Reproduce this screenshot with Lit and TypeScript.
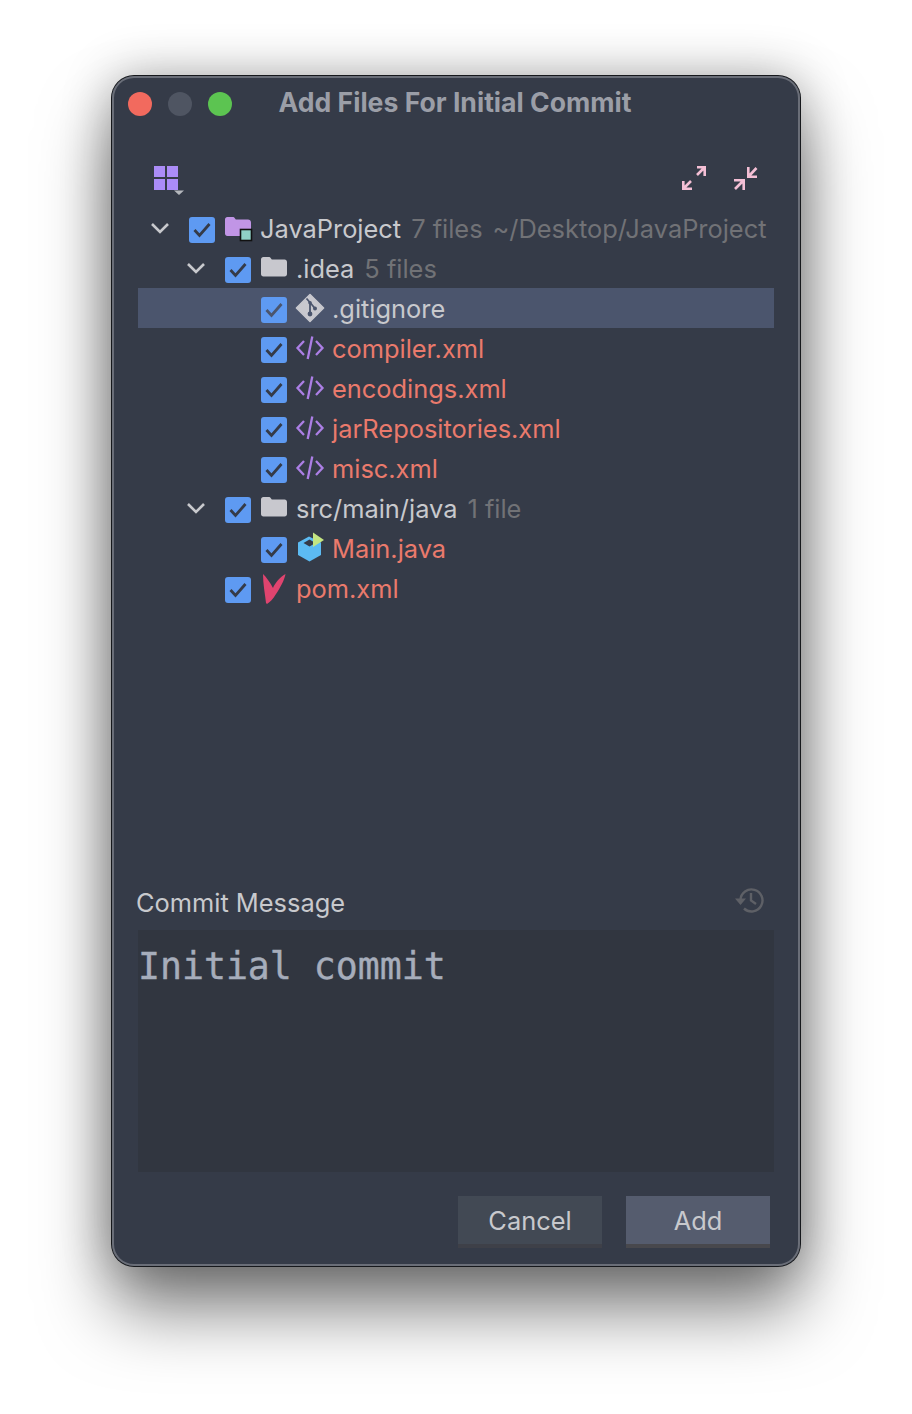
import { LitElement, html, css, svg } from "lit";
import { customElement } from "lit/decorators.js";

type Row = {
  depth: number;
  name: string;
  icon: string;
  meta?: string;
  path?: string;
  open?: boolean;
  added?: boolean;
  selected?: boolean;
};

const rows: Row[] = [
  { depth: 0, name: "JavaProject", icon: "project", meta: "7 files", path: "~/Desktop/JavaProject", open: true },
  { depth: 1, name: ".idea", icon: "folder", meta: "5 files", open: true },
  { depth: 2, name: ".gitignore", icon: "git", selected: true },
  { depth: 2, name: "compiler.xml", icon: "xml", added: true },
  { depth: 2, name: "encodings.xml", icon: "xml", added: true },
  { depth: 2, name: "jarRepositories.xml", icon: "xml", added: true },
  { depth: 2, name: "misc.xml", icon: "xml", added: true },
  { depth: 1, name: "src/main/java", icon: "folder", meta: "1 file", open: true },
  { depth: 2, name: "Main.java", icon: "java", added: true },
  { depth: 1, name: "pom.xml", icon: "maven", added: true },
];

const icons: Record<string, unknown> = {
  project: svg`
    <path d="M1 5.5C1 4.1 2 3 3.400 3H8.600C9.600 3 10.400 3.500 11 4.400L11.800 5.500H24C25.600 5.500 27 6.800 27 8.400V19.500C27 21 25.800 22 24.400 22H3.400C2 22 1 21 1 19.500Z" fill="#c195e6"/>
    <rect x="16.500" y="15.500" width="11" height="11" fill="#8fd0c6" stroke="#111" stroke-width="1.600"/>`,
  folder: svg`
    <path d="M1 5.500C1 4.100 2 3 3.400 3H8.600C9.600 3 10.400 3.500 11 4.400L11.800 5.500H24.600C26 5.500 27 6.600 27 8V20C27 21.400 26 22.500 24.600 22.500H3.400C2 22.500 1 21.400 1 20Z" fill="#c8c8ce"/>`,
  git: svg`
    <path d="M14 0.500 L27.600 14 L14 27.500 L0.400 14Z" fill="#c8c8ce" stroke="#c8c8ce" stroke-width="1.500" stroke-linejoin="round"/>
    <path d="M10.500 4.500 L14 8.500M14 8.500V20M14.500 9 L19 14.500" fill="none" stroke="#4b556d" stroke-width="1.800"/>
    <circle cx="14" cy="20" r="2.400" fill="#4b556d"/>
    <circle cx="14" cy="8.800" r="1.800" fill="#4b556d"/>
    <circle cx="19" cy="14.500" r="2" fill="#4b556d"/>`,
  xml: svg`
    <path d="M8 7 L1.500 14 L8 21M20 7 L26.500 14 L20 21" fill="none" stroke="#ac7fe6" stroke-width="2.300"/>
    <path d="M16.300 2.500 L11.700 25" fill="none" stroke="#ac7fe6" stroke-width="2.300"/>`,
  java: svg`
    <path d="M13 2.500 L25 8.500V21L13.500 27.500 L2 21V8.500Z" fill="#5cbbf3"/>
    <path d="M13.500 5.500 L19.500 9 L13.500 12.500 L7.500 9Z" fill="#353b48"/>
    <path d="M17 -1.500 L28 6 L17 13Z" fill="#c4e582"/>`,
  maven: svg`
    <path d="M3 0C6 3 10 8 13 14C15 9 20 3 25.500 0C24.500 6 20 14 16 20C13 25 10 28 7 30L6 29C5 20 3 10 3 0Z" fill="#e0446f"/>`,
};

@customElement("app-root")
export class AppRoot extends LitElement {
  render() {
    return html`
      <div class="window">
        <header class="titlebar">
          <div class="lights">
            <span class="light red"></span>
            <span class="light grey"></span>
            <span class="light green"></span>
          </div>
          <div class="title">Add Files For Initial Commit</div>
        </header>

        <div class="toolbar">
          <svg class="group" width="32" height="32" viewBox="0 0 32 32">
            <path d="M0 0H11V11H0ZM13 0H24V11H13ZM0 13H11V24H0ZM13 13H24V24H13Z" fill="#ab8cf7"/>
            <path d="M20 24.500H30L25 29Z" fill="#b5b8bd"/>
          </svg>
          <div class="tools">
            <svg width="26" height="26" viewBox="0 0 26 26" fill="none" stroke="#f4bfd5" stroke-width="2.600">
              <path d="M17 1.300H24.700V10M24 2L17 9M3.300 15V22.700H12M4 22L11 15"/>
            </svg>
            <svg width="26" height="26" viewBox="0 0 26 26" fill="none" stroke="#f4bfd5" stroke-width="2.600">
              <path d="M16.300 1V10.700H25M17 10L24.500 2M2 14.300H11.700V24M11 15L3 23"/>
            </svg>
          </div>
        </div>

        <div class="tree">
          ${rows.map(
            (r) => html`
              <div class="row ${r.selected ? "selected" : ""}" style="padding-left:${8 + r.depth * 36}px">
                <span class="chevron">
                  ${r.open
                    ? html`<svg width="20" height="12" viewBox="0 0 20 12">
                        <path d="M2 2 L10 10 L18 2" fill="none" stroke="#c8c9cd" stroke-width="2.600"/>
                      </svg>`
                    : ""}
                </span>
                <span class="check">
                  <svg width="20" height="18" viewBox="0 0 20 18">
                    <path d="M2.500 9 L7.500 14.500 L17.500 3" fill="none" stroke="${r.selected ? "#4b556d" : "#353b48"}" stroke-width="2.800"/>
                  </svg>
                </span>
                <svg class="icon" width="28" height="28" viewBox="0 0 28 28">${icons[r.icon]}</svg>
                <span class="name ${r.added ? "added" : ""}">${r.name}</span>
                ${r.meta ? html`<span class="meta">${r.meta}</span>` : ""}
                ${r.path ? html`<span class="meta">${r.path}</span>` : ""}
              </div>
            `
          )}
        </div>

        <div class="message-head">
          <span class="label">Commit Message</span>
          <svg width="30" height="28" viewBox="0 0 30 28">
            <path d="M6.500 14A11 11 0 1 1 10 22.500" fill="none" stroke="#5e6066" stroke-width="2.400"/>
            <path d="M1 12.500H12L6.500 19Z" fill="#5e6066"/>
            <path d="M17 7V14.500L22 18" fill="none" stroke="#5e6066" stroke-width="2.400"/>
          </svg>
        </div>
        <div class="message">Initial commit</div>

        <div class="buttons">
          <button class="cancel">Cancel</button>
          <button class="add">Add</button>
        </div>
      </div>
    `;
  }

  static styles = css`
    :host {
      display: flex;
      justify-content: center;
      box-sizing: border-box;
      width: 912px;
      height: 1414px;
      padding-top: 76px;
      background: #fff;
      font-family: Inter, "Liberation Sans", sans-serif;
    }

    .window {
      box-sizing: border-box;
      width: 688px;
      height: 1190px;
      display: flex;
      flex-direction: column;
      padding: 0 26px;
      background: #353b48;
      border-radius: 22px;
      box-shadow: inset 0 0 0 2px #6a6e78, 0 0 0 1px #16181c, 0 44px 70px rgba(0, 0, 0, 0.5), 0 0 50px rgba(0, 0, 0, 0.3);
    }

    .titlebar {
      position: relative;
      height: 56px;
      flex: none;
      display: flex;
      align-items: center;
      justify-content: center;
    }

    .lights {
      position: absolute;
      left: -10px;
      top: 16px;
      display: flex;
      gap: 16px;
    }

    .light {
      width: 24px;
      height: 24px;
      border-radius: 50%;
    }

    .red { background: #f26a5e; }
    .grey { background: #4f5562; }
    .green { background: #5cc451; }

    .title {
      font-size: 26.600px;
      font-weight: 700;
      color: #9b9ea7;
      margin: -4px 2px 0 0;
    }

    .toolbar {
      flex: none;
      height: 76px;
      display: flex;
      justify-content: space-between;
      align-items: flex-start;
      padding: 34px 16px 0 16px;
      box-sizing: border-box;
    }

    .tools {
      display: flex;
      gap: 26px;
    }

    .tree {
      flex: none;
      height: 674px;
      font-size: 25.400px;
    }

    .row {
      display: flex;
      align-items: center;
      height: 40px;
      box-sizing: border-box;
      color: #c8c9cd;
      white-space: nowrap;
    }

    .row.selected {
      background: #4b556d;
    }

    .chevron {
      flex: none;
      width: 28px;
      margin-right: 15px;
      display: flex;
      justify-content: center;
    }

    .check {
      flex: none;
      width: 26px;
      height: 26px;
      margin-top: 4px;
      margin-right: 9px;
      border-radius: 3px;
      background: #5e9af2;
      display: flex;
      align-items: center;
      justify-content: center;
    }

    .icon {
      flex: none;
      overflow: visible;
      margin-right: 8px;
    }

    .name.added {
      color: #ea7a6c;
    }

    .meta {
      margin-left: 10px;
      color: #717276;
    }

    .message-head {
      flex: none;
      display: flex;
      justify-content: space-between;
      align-items: flex-start;
      height: 48px;
      padding: 4px 10px 0 0;
      box-sizing: border-box;
      margin-left: -2px;
      font-size: 25.400px;
      color: #c8c9cd;
    }

    .label {
      margin-top: 1px;
    }

    .message {
      flex: none;
      height: 242px;
      background: #313640;
      box-sizing: border-box;
      padding: 13px 0 0 0;
      font-family: "DejaVu Sans Mono", "Liberation Mono", monospace;
      font-size: 36.500px;
      line-height: 48px;
      color: #a6adbb;
      -webkit-text-stroke: 0.4px #a6adbb;
    }

    .buttons {
      flex: none;
      display: flex;
      justify-content: flex-end;
      gap: 24px;
      padding: 24px 4px 0 0;
    }

    button {
      width: 144px;
      height: 52px;
      padding: 0;
      border: none;
      border-radius: 0;
      font: inherit;
      font-size: 25.400px;
      color: #c8c9cd;
    }

    .cancel {
      background: #424954;
      border-bottom: 4px solid #3e4048;
    }

    .add {
      background: #555c6e;
      border-bottom: 4px solid #48484d;
    }
  `;
}
